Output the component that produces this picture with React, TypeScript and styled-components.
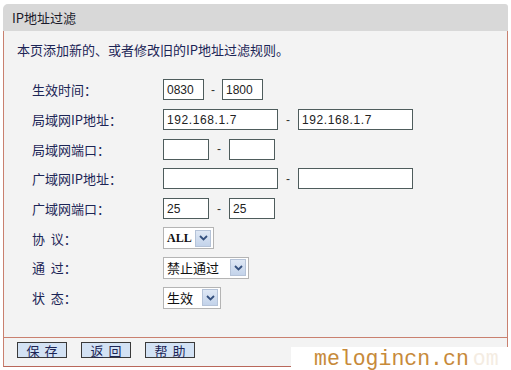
import React from "react";
import styled, { createGlobalStyle } from "styled-components";

const Global = createGlobalStyle`
  html, body { margin: 0; padding: 0; background: #ffffff; }
  body { font-family: "Noto Sans CJK SC", "Noto Sans", sans-serif; }
`;

const Page = styled.div`
  position: relative;
  width: 511px;
  height: 370px;
  padding: 4px 3px 0 3px;
  box-sizing: border-box;
  overflow: hidden;
`;

const Panel = styled.div`
  width: 505px;
  display: flex;
  flex-direction: column;
`;

const Header = styled.div`
  height: 27px;
  background: #d8d8d8;
  border-radius: 5px 3px 0 0;
  display: flex;
  align-items: center;
  padding-left: 9px;
  font-size: 13px;
  color: #1a1a2a;
`;

const Body = styled.div`
  background: #f3f3f3;
  border-left: 1px solid #c9806f;
  border-right: 1px solid #c9806f;
  display: flex;
  flex-direction: column;
`;

const Intro = styled.div`
  font-size: 13px;
  line-height: 20px;
  color: #1c2556;
  padding: 9px 0 0 13px;
  height: 20px;
`;

const Form = styled.div`
  display: grid;
  grid-template-columns: 131px 1fr;
  grid-auto-rows: 29.7px;
  padding: 15px 0 0 28px;
  height: 262px;
  align-content: start;
`;

const Label = styled.div`
  display: flex;
  align-items: center;
  font-size: 13px;
  color: #1c2556;
  white-space: pre;
`;

const Controls = styled.div`
  display: flex;
  align-items: center;
`;

const Input = styled.div<{ $w: number }>`
  width: ${(p) => p.$w}px;
  height: 21px;
  box-sizing: border-box;
  border: 1px solid #4e5c5c;
  background: #ffffff;
  font-family: "Liberation Sans", "DejaVu Sans", sans-serif;
  font-size: 12px;
  color: #222;
  display: flex;
  align-items: center;
  padding-left: 3px;
  letter-spacing: ${(p) => (p.$w > 100 ? "0.6px" : "0")};
`;

const Dash = styled.span<{ $w: number }>`
  width: ${(p) => p.$w}px;
  text-align: center;
  font-family: "Liberation Sans", sans-serif;
  font-size: 12px;
  color: #333;
`;

const Select = styled.div<{ $w: number }>`
  width: ${(p) => p.$w}px;
  height: 22px;
  box-sizing: border-box;
  border: 1px solid #b4b4b4;
  background: #ffffff;
  display: flex;
  align-items: center;
  justify-content: space-between;
  padding: 0 2px 0 3px;
  font-size: 13px;
  color: #111;
`;

const AllText = styled.span`
  font-family: "Liberation Serif", serif;
  font-weight: bold;
  font-size: 12px;
`;

const Arrow = styled.div`
  width: 16px;
  height: 17px;
  box-sizing: border-box;
  border: 1px solid #b5c3d8;
  background: linear-gradient(#dfe8f5, #c3d3ea);
  display: flex;
  align-items: center;
  justify-content: center;
`;

const Footer = styled.div`
  border: 1px solid #c9806f;
  border-bottom-color: #b8675a;
  height: 30px;
  box-sizing: border-box;
  display: flex;
  align-items: flex-start;
  padding: 4px 0 0 13px;
  gap: 14px;
  background: #f3f3f3;
`;

const Button = styled.div`
  width: 50px;
  height: 16px;
  box-sizing: border-box;
  border: 1px solid #3a3a3a;
  background: #d3e2f4;
  display: flex;
  align-items: center;
  justify-content: center;
  font-size: 13px;
  color: #1c2556;
  letter-spacing: 5px;
  padding-left: 5px;
`;

const Watermark = styled.div`
  position: absolute;
  left: 291px;
  top: 347px;
  width: 220px;
  height: 23px;
  background: #ffffff;
  display: flex;
  align-items: center;
  padding-left: 23px;
  box-sizing: border-box;
  font-family: "Liberation Mono", monospace;
  font-size: 21.5px;
  color: #c78a3a;
  white-space: nowrap;
`;

const Faded = styled.span`
  color: #f4ece2;
  margin-left: 4px;
`;

const Chevron = () => (
  <Arrow>
    <svg width="9" height="6" viewBox="0 0 9 6">
      <path d="M1 1 L4.5 4.5 L8 1" fill="none" stroke="#34507e" strokeWidth="1.8" />
    </svg>
  </Arrow>
);

export default function App() {
  return (
    <>
      <Global />
      <Page>
        <Panel>
          <Header>IP地址过滤</Header>
          <Body>
            <Intro>本页添加新的、或者修改旧的IP地址过滤规则。</Intro>
            <Form>
              <Label>生效时间：</Label>
              <Controls>
                <Input $w={41}>0830</Input>
                <Dash $w={18}>-</Dash>
                <Input $w={41}>1800</Input>
              </Controls>

              <Label>局域网IP地址：</Label>
              <Controls>
                <Input $w={115}>192.168.1.7</Input>
                <Dash $w={20}>-</Dash>
                <Input $w={115}>192.168.1.7</Input>
              </Controls>

              <Label>局域网端口：</Label>
              <Controls>
                <Input $w={46} />
                <Dash $w={20}>-</Dash>
                <Input $w={46} />
              </Controls>

              <Label>广域网IP地址：</Label>
              <Controls>
                <Input $w={115} />
                <Dash $w={20}>-</Dash>
                <Input $w={115} />
              </Controls>

              <Label>广域网端口：</Label>
              <Controls>
                <Input $w={46}>25</Input>
                <Dash $w={20}>-</Dash>
                <Input $w={46}>25</Input>
              </Controls>

              <Label>协  议：</Label>
              <Controls>
                <Select $w={51}>
                  <AllText>ALL</AllText>
                  <Chevron />
                </Select>
              </Controls>

              <Label>通  过：</Label>
              <Controls>
                <Select $w={86}>
                  <span>禁止通过</span>
                  <Chevron />
                </Select>
              </Controls>

              <Label>状  态：</Label>
              <Controls>
                <Select $w={58}>
                  <span>生效</span>
                  <Chevron />
                </Select>
              </Controls>
            </Form>
          </Body>
          <Footer>
            <Button>保存</Button>
            <Button>返回</Button>
            <Button>帮助</Button>
          </Footer>
        </Panel>
        <Watermark>
          melogincn.cn<Faded>om</Faded>
        </Watermark>
      </Page>
    </>
  );
}
